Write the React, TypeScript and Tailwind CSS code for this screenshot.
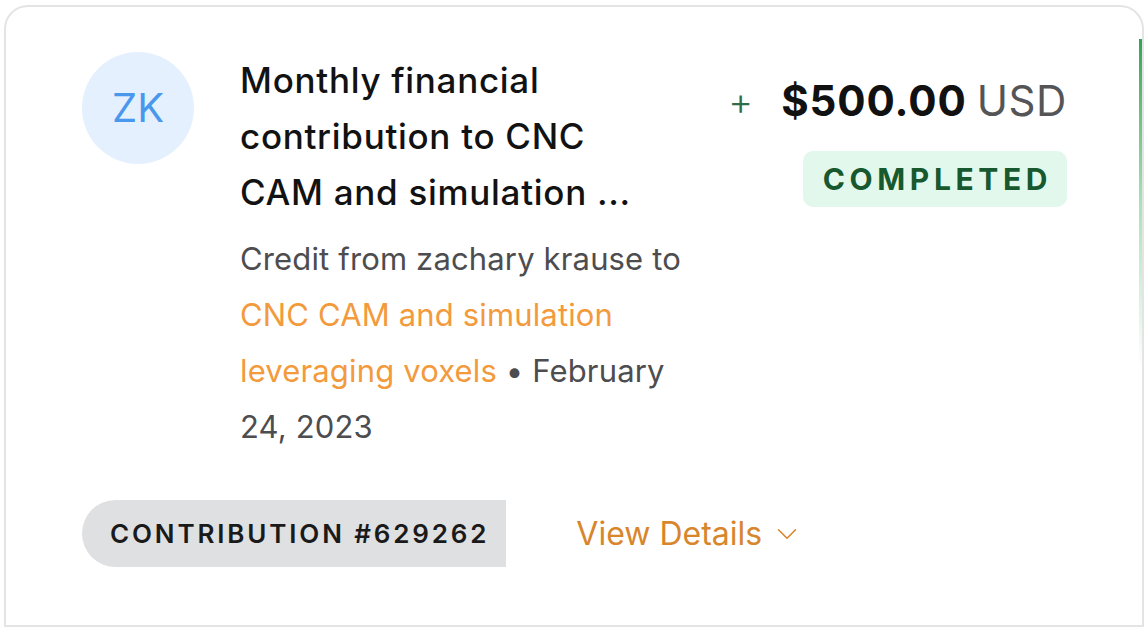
import { ChevronDown } from 'lucide-react';

const App = () => {
  return (
    <div className="h-[630px] w-[1148px] overflow-hidden bg-white pl-[4px] pt-[5px] font-['Inter',sans-serif]">
      <div className="relative h-[622px] w-[1140px] rounded-t-[24px] border-2 border-[#e4e4e4] pl-[76px] pr-[75px] pt-[45px]">
        {/* status accent */}
        <div className="absolute right-[0px] top-[32px] h-[330px] w-[3px] bg-gradient-to-b from-[#2fa554] via-[#a6e3b8] to-transparent" />

        <div className="flex items-start">
          <div className="flex h-[112px] w-[112px] shrink-0 items-center justify-center rounded-full bg-[#e4f0fd] text-[40px] text-[#4a98ee]">
            ZK
          </div>

          <div className="ml-[46px] w-[455px] shrink-0">
            <h3 className="w-[420px] text-[35px] leading-[56px] font-medium tracking-[0.7px] text-[#121212]">
              Monthly financial contribution to CNC CAM and simulation ...
            </h3>
            <p className="mt-[11px] text-[31px] leading-[56px] tracking-[0.15px] text-[#4d4d4f]">
              Credit from zachary krause to{' '}
              <span className="text-[#f29a3c]">CNC CAM and simulation leveraging voxels</span>
              {' • '}February 24, 2023
            </p>
          </div>

          <div className="ml-auto flex flex-col items-end pt-[21px]">
            <div className="flex items-center leading-[56px]">
              <span className="mr-[28px] text-[38px] font-light text-[#2d6e48]">+</span>
              <span className="text-[42px] font-bold tracking-[0.9px] text-[#111]">$500.00</span>
              <span className="ml-[10px] text-[42px] tracking-[0.6px] text-[#555557]">USD</span>
            </div>
            <div className="mt-[22px] flex h-[56px] items-center rounded-[10px] bg-[#e3f8ec] pl-[20px] pr-[15px] text-[30px] font-bold tracking-[4.6px] text-[#17582f]">
              COMPLETED
            </div>
          </div>
        </div>

        <div className="mt-[45px] flex items-center">
          <div className="flex h-[67px] items-center rounded-l-full rounded-r-[4px] bg-[#dfe0e2] pl-[28px] pr-[17px] text-[26px] font-semibold tracking-[2.85px] text-[#1a1a1a]">
            CONTRIBUTION #629262
          </div>
          <button className="ml-[70px] flex items-center text-[32px] text-[#d8862c]">
            View Details
            <ChevronDown className="ml-[8px] h-[34px] w-[34px]" strokeWidth={1.1} />
          </button>
        </div>
      </div>
    </div>
  );
};

export default App;
